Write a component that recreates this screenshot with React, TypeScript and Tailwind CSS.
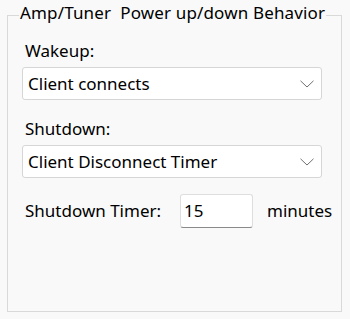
import React from "react";

function Chevron() {
  return (
    <svg width="14" height="8" viewBox="0 0 14 8" fill="none" className="shrink-0">
      <path d="M0.5 0.8 L7 7 L13.5 0.8" stroke="#707070" strokeWidth="1" />
    </svg>
  );
}

export default function App() {
  return (
    <div
      className="w-[350px] h-[319px] overflow-hidden bg-[#f9f9f9] pt-[15px] pl-[7px] text-[17px] text-black"
      style={{ fontFamily: '"Noto Sans", "Open Sans", sans-serif' }}
    >
      <div className="w-[335px] h-[297px] border border-[#d9d9d9] pl-[14px]">
        <div className="-mt-[13px] -ml-[3px] w-fit px-[1px] bg-[#f9f9f9] leading-[20px] tracking-[0.15px] whitespace-nowrap">
          Amp/Tuner&nbsp; Power up/down Behavior
        </div>
        <div className="mt-[18px] pl-[3px] leading-[20px]">Wakeup:</div>
        <div className="mt-[6px] h-[33px] w-[300px] bg-white border border-[#d6d6d6] rounded-[3px] flex items-center justify-between pl-[5px] pr-[7px] leading-[20px]">
          <span>Client connects</span>
          <Chevron />
        </div>
        <div className="mt-[19px] pl-[3px] leading-[20px]">Shutdown:</div>
        <div className="mt-[6px] h-[33px] w-[300px] bg-white border border-[#d6d6d6] rounded-[3px] flex items-center justify-between pl-[5px] pr-[7px] leading-[20px]">
          <span>Client Disconnect Timer</span>
          <Chevron />
        </div>
        <div className="mt-[16px] flex items-center leading-[20px]">
          <span className="pl-[3px] w-[158px] shrink-0">Shutdown Timer:</span>
          <div className="h-[34px] w-[73px] shrink-0 bg-white border border-[#dedede] border-b-[#8a8a8a] rounded-[3px] flex items-center pl-[3px]">
            15
          </div>
          <span className="ml-[14px] whitespace-nowrap">minutes</span>
        </div>
      </div>
    </div>
  );
}
